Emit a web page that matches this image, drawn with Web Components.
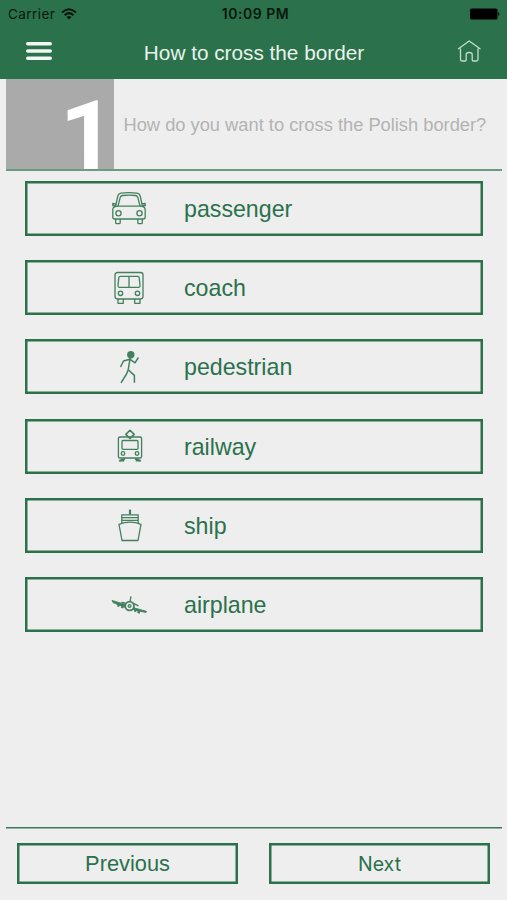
<!DOCTYPE html>
<html lang="en">
<head>
<meta charset="utf-8">
<title>How to cross the border</title>
<style>
html, body {
    margin: 0;
    height: 100%;
    background: #EEE;
    font-family: "Liberation Sans", Arial, sans-serif;
    --green: #2B714B;
    --grey: #AAA;
}
</style>
</head>
<body>
<border-app>
    <status-bar slot="top"></status-bar>
    <nav-bar slot="top">How to cross the border</nav-bar>
    <step-title step="1">How do you want to cross the Polish border?</step-title>
    <option-list>
        <travel-option icon="car">passenger</travel-option>
        <travel-option icon="coach">coach</travel-option>
        <travel-option icon="walk">pedestrian</travel-option>
        <travel-option icon="train">railway</travel-option>
        <travel-option icon="ship">ship</travel-option>
        <travel-option icon="plane">airplane</travel-option>
    </option-list>
    <step-button slot="bottom">Previous</step-button>
    <step-button slot="bottom" class="next">Next</step-button>
</border-app>

<script>
// all icons share a 40x40 box
const icons = {
    car: `
        <path d="M6.6 17.5 8.8 6.8Q9.3 4.6 12 4.2Q20 3.2 28 4.2Q30.7 4.6 31.2 6.8L33.4 17.5"/>
        <path d="M9 17.2 11.2 8.4Q11.6 6.7 13.5 6.5Q20 5.8 26.5 6.5Q28.4 6.7 28.8 8.4L31 17.2Z"/>
        <path d="M7 15 3.8 14.5V16.5L6 17M33 15 36.2 14.5V16.5L34 17M9 17.2Q4.2 17.6 3.8 20V28Q3.8 30 5.8 30H34.2Q36.2 30 36.2 28V20Q35.8 17.6 31 17.2"/>
        <path d="M6.7 30V33.7Q6.7 34.7 7.7 34.7H10.2Q11.2 34.7 11.2 33.7V30M28.8 30V33.7Q28.8 34.7 29.8 34.7H32.3Q33.3 34.7 33.3 33.7V30"/>
        <circle cx="9.5" cy="24.3" r="2.6"/><circle cx="30.5" cy="24.3" r="2.6"/>`,
    coach: `
        <rect x="6" y="3.5" width="28" height="26.5" rx="2.4"/>
        <path d="M11.4 7.3H28.8Q30 7.3 30.2 8.5L31 16.8Q31 18.3 29.8 18.3H10.2Q9 18.3 9 16.8L9.8 8.5Q10 7.3 11.4 7.3ZM20 7.3V18.3"/>
        <path d="M9 30V34.3H14.3V30M25.7 30V34.3H31V30"/>
        <circle cx="11.5" cy="24.3" r="2.2"/><circle cx="28.5" cy="24.3" r="2.2"/>`,
    walk: `
        <circle cx="21.8" cy="6.8" r="3.7" fill="currentColor" stroke="none"/>
        <path stroke-width="1.5" d="M21.3 9 19.2 21.8M20.8 11.2 14.5 13 11.5 19M20.8 11.2 26 14.8 29.4 9.5M19.2 21.8 17.5 26 12 34.8M19.2 21.8 25.4 27.4V34.8"/>`,
    train: `
        <g transform="translate(1 1)">
        <path stroke-width="1.6" d="M20 2.3 24.2 6.4 20 10.3 15.8 6.4Z"/>
        <rect x="8.4" y="9" width="23.2" height="21" rx="1.6"/>
        <rect x="12" y="12.5" width="16" height="8.8" rx="1"/>
        <circle cx="13" cy="25.5" r="1.8"/><circle cx="27" cy="25.5" r="1.8"/>
        <path stroke-width="2" d="M14.8 31 9.2 33M25.2 31 30.8 33M10 32.6H14.2M25.8 32.6H30"/>
        </g>`,
    ship: `
        <g transform="translate(1 2)">
        <path stroke-width="2.2" d="M20 1.6V6.5"/>
        <path d="M11.8 15.3V6.8H28.2V15.3M11.8 9.6H28.2M11.8 12.3H28.2"/>
        <path d="M9 16.3Q14 14.2 20 14.2T31 16.3L28 32.5H12Z"/>
        </g>`,
    plane: `
        <circle cx="20.6" cy="20" r="4.4" stroke-width="1.8"/>
        <circle cx="20.6" cy="20" r="1.4"/>
        <path d="M21.9 10.4 21.1 16M16.2 17 12.5 16.4M24.5 17.4 29.5 19.8"/>
        <path fill="currentColor" stroke-width=".8" d="M3 14.4 16.5 18.4V21.4L9 18.8 4 16.6ZM24.8 21.8 37.5 25.3 37 26.5 24.5 23.9Z"/>
        <path stroke-width="2.8" d="M8.5 18.9 10.6 19.8M12.3 20.4 14.6 21.3M25.4 24.5H27.3M28.6 25.7 31 26.3"/>`
}

class BorderApp extends HTMLElement {
    constructor() {
        super()
        this.attachShadow({mode: 'open'}).innerHTML =
        `
        <style>
        :host {
            display: flex;
            flex-direction: column;
            height: 900px;
            background: #EEE;
        }
        header {
            height: 79px;
            background: var(--green);
        }
        main {
            flex: 1;
            padding: 0 5px 0 6px;
        }
        footer {
            box-sizing: border-box;
            display: flex;
            gap: 31px;
            height: 73px;
            margin: 0 5px 0 6px;
            padding: 16px 12px 0 11px;
            box-shadow: inset 0 1.4px 0 #38785A;
        }
        </style>
        <header><slot name="top"></slot></header>
        <main><slot></slot></main>
        <footer><slot name="bottom"></slot></footer>
        `
    }
}

class StatusBar extends HTMLElement {
    constructor() {
        super()
        this.attachShadow({mode: 'open'}).innerHTML =
        `
        <style>
        :host {
            display: grid;
            grid-template-columns: 1fr auto 1fr;
            align-items: center;
            height: 27px;
            padding: 0 6px 0 8px;
            font: 13.5px/28px Inter, Roboto, sans-serif;
            color: #08180F;
        }
        .carrier {
            display: flex;
            align-items: center;
            gap: 6px;
            letter-spacing: .45px;
        }
        b {
            font-weight: 600;
            font-size: 14px;
            letter-spacing: .5px;
            margin-left: 2px;
        }
        .battery {
            justify-self: end;
        }
        svg {
            display: block;
        }
        </style>
        <div class="carrier">Carrier
            <svg width="16" height="12" viewBox="0 0 16 12" fill="none" stroke="#08180F" stroke-width="2">
                <path d="M1 4.5Q8-2 15 4.5M3.6 7.2Q8 3.1 12.4 7.2"/>
                <path d="M5.5 8.9Q8 6.9 10.5 8.9L8 11.5Z" fill="#08180F" stroke="none"/>
            </svg>
        </div>
        <b>10:09 PM</b>
        <svg class="battery" width="31" height="12" viewBox="0 0 31 12">
            <rect x="0" y=".5" width="27.5" height="11" rx="1.6"/>
            <path d="M28.3 4Q30.6 6 28.3 8Z"/>
        </svg>
        `
    }
}

class NavBar extends HTMLElement {
    constructor() {
        super()
        this.attachShadow({mode: 'open'}).innerHTML =
        `
        <style>
        :host {
            display: grid;
            grid-template-columns: 1fr auto 1fr;
            align-items: center;
            height: 48px;
            padding: 0 25px 0 26px;
            color: #E9F3EC;
            font-size: 20.75px;
        }
        .title {
            padding-top: 3px;
        }
        .home {
            justify-self: end;
        }
        svg {
            display: block;
        }
        </style>
        <svg width="26" height="20" viewBox="0 0 26 20" stroke="#F2F7F3" stroke-width="3.6" stroke-linecap="round">
            <path d="M1.8 2.7H24.2M1.8 10H24.2M1.8 17.3H24.2"/>
        </svg>
        <div class="title"><slot></slot></div>
        <svg class="home" width="26" height="24" viewBox="0 0 26 24" fill="none" stroke="#BFE0CC" stroke-width="1.3" stroke-linejoin="round" stroke-linecap="round">
            <path d="M2.5 9.8 13.2 1.9 24 9.8M4.5 10V20.5Q4.5 22 6 22H9.2Q10.2 22 10.2 21V15.5Q10.2 13.5 13.2 13.5T16.2 15.5V21Q16.2 22 17.2 22H20.5Q22 22 22 20.5V10"/>
        </svg>
        `
    }
}

class StepTitle extends HTMLElement {
    constructor() {
        super()
        this.attachShadow({mode: 'open'}).innerHTML =
        `
        <style>
        :host {
            box-sizing: border-box;
            display: flex;
            height: 92px;
            border-bottom: 2px solid #6D9A83;
        }
        .step {
            box-sizing: border-box;
            width: 107.5px;
            height: 90px;
            background: var(--grey);
            color: #FFF;
            font: bold 97px/114px Roboto, sans-serif;
            text-align: right;
            letter-spacing: -2px;
        }
        .question {
            padding-left: 10px;
            color: #B3B3B3;
            font-size: 18.3px;
            line-height: 92px;
            white-space: nowrap;
        }
        </style>
        <div class="step">${this.getAttribute('step')}</div>
        <div class="question"><slot></slot></div>
        `
    }
}

class OptionList extends HTMLElement {
    constructor() {
        super()
        this.attachShadow({mode: 'open'}).innerHTML =
        `
        <style>
        :host {
            display: flex;
            flex-direction: column;
            gap: 24.3px;
            padding: 9.8px 19px 0 19px;
        }
        </style>
        <slot></slot>
        `
    }
}

class TravelOption extends HTMLElement {
    constructor() {
        super()
        this.attachShadow({mode: 'open'}).innerHTML =
        `
        <style>
        :host {
            box-sizing: border-box;
            display: flex;
            align-items: center;
            height: 55px;
            padding: 2px 0 0 84px;
            box-shadow: inset 0 0 0 2.5px var(--green);
            color: var(--green);
            font-size: 23.2px;
            cursor: pointer;
        }
        svg {
            width: 40px;
            height: 40px;
            margin-right: 35px;
            opacity: .88;
        }
        </style>
        <svg viewBox="0 0 40 40" fill="none" stroke="currentColor" stroke-width="1.3" stroke-linejoin="round">${icons[this.getAttribute('icon')]}</svg>
        <slot></slot>
        `
    }
}

class StepButton extends HTMLElement {
    constructor() {
        super()
        this.attachShadow({mode: 'open'}).innerHTML =
        `
        <style>
        :host {
            box-sizing: border-box;
            flex: 1;
            height: 41px;
            box-shadow: inset 0 0 0 2.5px var(--green);
            color: var(--green);
            font-size: 21.8px;
            line-height: 42px;
            text-align: center;
            cursor: pointer;
        }
        :host(.next) {
            font-family: Inter, Roboto, sans-serif;
            font-size: 19.5px;
        }
        </style>
        <slot></slot>
        `
    }
}

customElements.define('border-app', BorderApp)
customElements.define('status-bar', StatusBar)
customElements.define('nav-bar', NavBar)
customElements.define('step-title', StepTitle)
customElements.define('option-list', OptionList)
customElements.define('travel-option', TravelOption)
customElements.define('step-button', StepButton)
</script>
</body>
</html>
